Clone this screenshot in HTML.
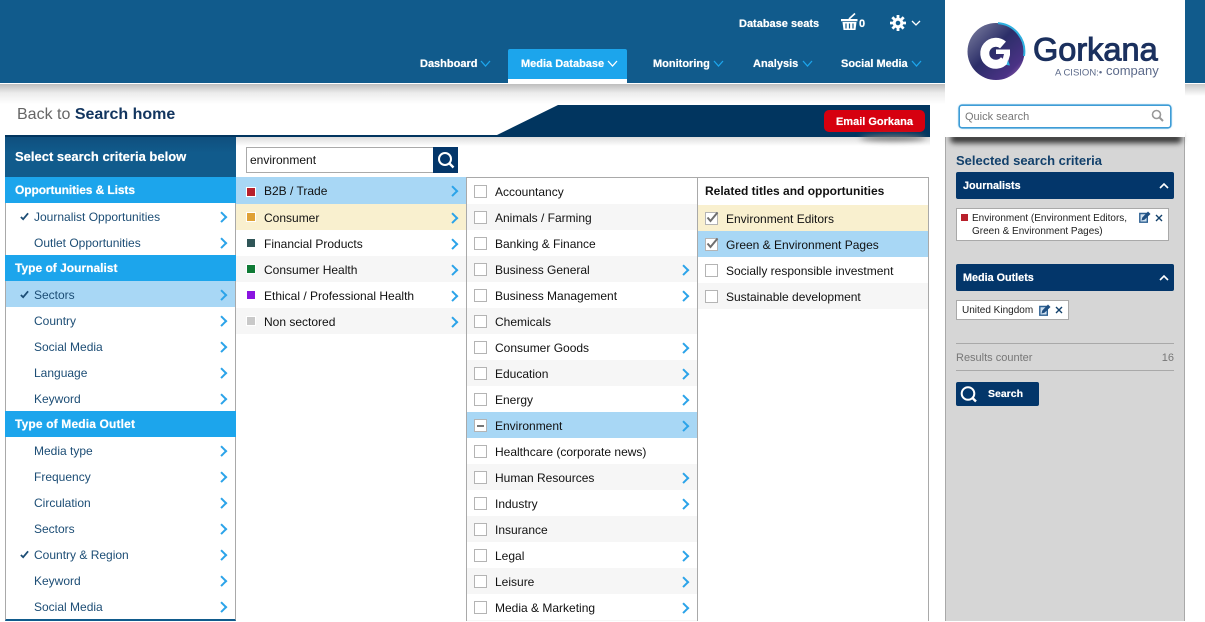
<!DOCTYPE html>
<html><head><meta charset="utf-8"><title>Gorkana</title>
<style>
*{box-sizing:border-box}
html,body{margin:0;padding:0;width:1205px;height:621px;overflow:hidden;background:#fff;font-family:"Liberation Sans",Arial,sans-serif;font-size:12px;color:#111}
.p{position:absolute;white-space:nowrap}
.nav{position:absolute;top:57px;font-weight:bold;font-size:11px;line-height:14px;color:#fff;white-space:nowrap;text-shadow:0 0 .6px #fff}
.nav svg{position:absolute;top:3px}
.list{position:absolute;overflow:hidden}
.r{position:relative;height:26px;line-height:28px;white-space:nowrap}
.r.g::after{content:"";position:absolute;width:5.5px;height:5.5px;border-top:2px solid #2ba3e9;border-right:2px solid #2ba3e9;transform:rotate(45deg);top:10px;right:10px}
.l .r{padding-left:28px;color:#1c4d75;line-height:29px}
.h{height:26px;line-height:26px;background:#1ca5ec;color:#fff;font-weight:bold;font-size:12px;padding-left:10px;text-shadow:0 0 .6px #fff}
.tk{position:absolute;left:14px;top:9px}
.c2 .r{padding-left:28px}
.c2 i{position:absolute;left:11px;top:9px;width:8px;height:8px;outline:1px solid #fff}
.c3 .r{padding-left:28px}
.c3 b,.c4 b{position:absolute;left:7px;top:7px;width:13px;height:13px;background:#fff;border:1px solid #b4b4b4}
.c4 .r{padding-left:28px}
.s{background:#f6f6f6}
.bar{position:absolute;left:956px;width:218px;height:27px;background:#03366a;border-radius:2px;color:#fff;font-weight:bold;font-size:10.8px;line-height:28px;padding-left:7px;text-shadow:0 0 .5px #fff}
.bar svg{position:absolute;right:5px;top:10px}
.tag{position:absolute;left:956px;background:#fff;border:1px solid #a9a9a9;font-size:10px;line-height:13px;color:#222;white-space:nowrap}
</style></head><body>

<!-- header -->
<div class="p" style="left:0;top:0;width:1205px;height:83px;background:#115b8c"></div>
<div class="p" style="left:0;top:83px;width:1205px;height:1px;background:#fff"></div>
<div class="p" style="left:0;top:84px;width:945px;height:20px;background:linear-gradient(#bdbdbd,#ececec 45%,#fff)"></div>
<div class="p" style="left:1185px;top:84px;width:20px;height:12px;background:linear-gradient(#c9c9c9,#fff)"></div>

<div class="p" style="left:739px;top:17px;font-weight:bold;font-size:11px;line-height:14px;color:#fff;text-shadow:0 0 .6px #fff">Database seats</div>
<svg class="p" style="left:841px;top:12px" width="17" height="19" viewBox="0 0 17 19"><path d="M8 7L14 1.500" stroke="#fff" stroke-width="1.600" fill="none"/><path d="M0 7h16.500v2.200H0z" fill="#fff"/><path d="M1.500 10h14l-1 8H2.500z" fill="#fff"/><path d="M5 11.500v5M8.500 11.500v5M12 11.500v5" stroke="#115b8c" stroke-width="1.200"/></svg>
<div class="p" style="left:859px;top:17px;font-weight:bold;font-size:11px;line-height:14px;color:#fff;text-shadow:0 0 .6px #fff">0</div>
<svg class="p" style="left:890px;top:15px" width="16" height="16" viewBox="0 0 16 16"><circle cx="8" cy="8" r="3.800" fill="none" stroke="#fff" stroke-width="3"/><path d="M8 0v16M0 8h16M2.300 2.300l11.400 11.400M13.700 2.300L2.300 13.700" stroke="#fff" stroke-width="2.800" stroke-dasharray="3 10 3" /></svg>
<svg class="p" style="left:911px;top:20px" width="10" height="7" viewBox="0 0 10 7"><path d="M1 1l4 4 4-4" fill="none" stroke="#fff" stroke-width="1.300"/></svg>

<div class="p" style="left:508px;top:49px;width:119px;height:34px;background:#1ca5ec;border-bottom:4px solid #fff;border-radius:2px 2px 0 0"></div>
<div class="nav" style="left:420px">Dashboard<svg style="left:60px" width="11" height="8" viewBox="0 0 11 8"><path d="M1 1l4.500 5L10 1" fill="none" stroke="#1ca5ec" stroke-width="1.300"/></svg></div>
<div class="nav" style="left:521px">Media Database<svg style="left:86px" width="11" height="8" viewBox="0 0 11 8"><path d="M1 1l4.500 5L10 1" fill="none" stroke="#fff" stroke-width="1.300"/></svg></div>
<div class="nav" style="left:653px">Monitoring<svg style="left:60px" width="11" height="8" viewBox="0 0 11 8"><path d="M1 1l4.500 5L10 1" fill="none" stroke="#1ca5ec" stroke-width="1.300"/></svg></div>
<div class="nav" style="left:753px">Analysis<svg style="left:49px" width="11" height="8" viewBox="0 0 11 8"><path d="M1 1l4.500 5L10 1" fill="none" stroke="#1ca5ec" stroke-width="1.300"/></svg></div>
<div class="nav" style="left:841px">Social Media<svg style="left:70px" width="11" height="8" viewBox="0 0 11 8"><path d="M1 1l4.500 5L10 1" fill="none" stroke="#1ca5ec" stroke-width="1.300"/></svg></div>

<!-- banner -->
<div class="p" style="left:17px;top:106px;font-size:16px;line-height:18px;color:#666">Back to <span style="font-weight:bold;color:#12355f">Search home</span></div>
<svg class="p" style="left:5px;top:105px" width="925" height="32" viewBox="0 0 925 32"><path d="M553 0H925V32H0V30H492Z" fill="#01355f"/></svg>
<div class="p" style="left:824px;top:110px;width:101px;height:22px;background:#d6000f;border-radius:5px;color:#fff;font-weight:bold;font-size:11px;line-height:24px;text-align:center;text-shadow:0 0 .5px #fff">Email Gorkana</div>

<!-- shadows beneath banner -->
<div class="p" style="left:236px;top:137px;width:694px;height:9px;background:linear-gradient(#dcdcdc,#fff)"></div>
<div class="p" style="left:860px;top:135px;width:66px;height:6px;background:#777;border-radius:50%;filter:blur(3px)"></div>
<div class="p" style="left:930px;top:105px;width:15px;height:45px;background:#fff"></div>

<!-- left column -->
<div class="p" style="left:5px;top:137px;width:231px;height:40px;background:linear-gradient(#0f4f7e,#115b8c 40%);color:#fff;font-weight:bold;font-size:13px;line-height:39px;padding-left:10px;text-shadow:0 0 .5px #fff">Select search criteria below</div>
<div class="list l" style="left:5px;top:177px;width:231px;height:444px;border-left:1px solid #a9a9a9;border-right:1px solid #a9a9a9;border-bottom:2px solid #115b8c;overflow:visible">
<div class="h" style="margin:0 -1px;letter-spacing:-.1px">Opportunities &amp; Lists</div>
<div class="r g"><svg class="tk" width="9" height="9" viewBox="0 0 10 10"><path d="M1 5.500l2.500 2.500L9 1.500" fill="none" stroke="#1c4d75" stroke-width="2"/></svg>Journalist Opportunities</div>
<div class="r g">Outlet Opportunities</div>
<div class="h" style="margin:0 -1px">Type of Journalist</div>
<div class="r g" style="background:#a8d7f5"><svg class="tk" width="9" height="9" viewBox="0 0 10 10"><path d="M1 5.500l2.500 2.500L9 1.500" fill="none" stroke="#1c4d75" stroke-width="2"/></svg>Sectors</div>
<div class="r g">Country</div>
<div class="r g">Social Media</div>
<div class="r g">Language</div>
<div class="r g">Keyword</div>
<div class="h" style="margin:0 -1px;letter-spacing:.15px">Type of Media Outlet</div>
<div class="r g">Media type</div>
<div class="r g">Frequency</div>
<div class="r g">Circulation</div>
<div class="r g">Sectors</div>
<div class="r g"><svg class="tk" width="9" height="9" viewBox="0 0 10 10"><path d="M1 5.500l2.500 2.500L9 1.500" fill="none" stroke="#1c4d75" stroke-width="2"/></svg>Country &amp; Region</div>
<div class="r g">Keyword</div>
<div class="r g">Social Media</div>
</div>

<!-- search box -->
<div class="p" style="left:246px;top:147px;width:188px;height:26px;background:#fff;border:1px solid #aaa;line-height:24px;padding-left:3px;font-size:12px">environment</div>
<svg class="p" style="left:433px;top:147px" width="25" height="26" viewBox="0 0 25 26"><rect width="25" height="26" fill="#03366a"/><circle cx="12" cy="12" r="6" fill="none" stroke="#fff" stroke-width="2"/><path d="M16.500 16.500l4 4" stroke="#fff" stroke-width="2.400"/></svg>

<!-- column 2 -->
<div class="list c2" style="left:236px;top:177px;width:231px;height:444px;border-right:1px solid #a9a9a9">
<div class="r g" style="background:#a8d7f5;height:27px;line-height:29px"><i style="background:#b8202b;top:11px"></i>B2B / Trade</div>
<div class="r g" style="background:#f9f0cf"><i style="background:#dfa136"></i>Consumer</div>
<div class="r g"><i style="background:#2f5557"></i>Financial Products</div>
<div class="r g s"><i style="background:#0f7a35"></i>Consumer Health</div>
<div class="r g"><i style="background:#8a14e0"></i>Ethical / Professional Health</div>
<div class="r g s"><i style="background:#c9c9c9"></i>Non sectored</div>
</div>

<!-- column 3 -->
<div class="list c3" style="left:467px;top:177px;width:231px;height:444px;border-right:1px solid #a9a9a9;border-top:1px solid #a9a9a9">
<div class="r"><b></b>Accountancy</div>
<div class="r s"><b></b>Animals / Farming</div>
<div class="r"><b></b>Banking &amp; Finance</div>
<div class="r g s"><b></b>Business General</div>
<div class="r g"><b></b>Business Management</div>
<div class="r s"><b></b>Chemicals</div>
<div class="r g"><b></b>Consumer Goods</div>
<div class="r g s"><b></b>Education</div>
<div class="r g"><b></b>Energy</div>
<div class="r g" style="background:#a8d7f5"><b><span style="position:absolute;left:2px;top:5px;width:7px;height:2px;background:#777"></span></b>Environment</div>
<div class="r"><b></b>Healthcare (corporate news)</div>
<div class="r g s"><b></b>Human Resources</div>
<div class="r g"><b></b>Industry</div>
<div class="r s"><b></b>Insurance</div>
<div class="r g"><b></b>Legal</div>
<div class="r g s"><b></b>Leisure</div>
<div class="r g"><b></b>Media &amp; Marketing</div>
<div class="s" style="height:1px"></div>
</div>

<!-- column 4 -->
<div class="list c4" style="left:698px;top:177px;width:231px;height:444px;border-right:1px solid #a9a9a9;border-top:1px solid #a9a9a9">
<div style="height:27px;line-height:27px;padding-left:7px;font-weight:bold;color:#111">Related titles and opportunities</div>
<div class="r" style="background:#f9f0cf"><b><svg style="position:absolute;left:0;top:-1px;overflow:visible" width="13" height="12" viewBox="0 0 13 12"><path d="M1.500 5.500l3 3.500 7-8.500" fill="none" stroke="#6f6f6f" stroke-width="2"/></svg></b>Environment Editors</div>
<div class="r" style="background:#a8d7f5"><b><svg style="position:absolute;left:0;top:-1px;overflow:visible" width="13" height="12" viewBox="0 0 13 12"><path d="M1.500 5.500l3 3.500 7-8.500" fill="none" stroke="#6f6f6f" stroke-width="2"/></svg></b>Green &amp; Environment Pages</div>
<div class="r"><b></b>Socially responsible investment</div>
<div class="r s"><b></b>Sustainable development</div>
</div>

<!-- sidebar -->
<div class="p" style="left:945px;top:137px;width:240px;height:484px;background:#d6d6d6;border-left:1px solid #a9a9a9;border-right:1px solid #a9a9a9"></div>
<div class="p" style="left:950px;top:134px;width:232px;height:9px;background:#333;filter:blur(3px);border-radius:4px"></div>
<div class="p" style="left:956px;top:153px;font-weight:bold;font-size:13px;line-height:15px;color:#12406b">Selected search criteria</div>

<div class="bar" style="top:172px">Journalists<svg width="10" height="7" viewBox="0 0 10 7"><path d="M1 6l4-4 4 4" fill="none" stroke="#fff" stroke-width="1.600"/></svg></div>
<div class="tag" style="top:208px;width:213px;height:33px;padding:3px 0 0 15px"><span style="position:absolute;left:4px;top:5px;width:7px;height:7px;background:#b8202b"></span>Environment (Environment Editors,<br>Green &amp; Environment Pages)
<svg style="position:absolute;left:182px;top:2px" width="12" height="12" viewBox="0 0 12 12"><path d="M.8 2.500h7.500v8.700H.8z" fill="#cfe0f0" stroke="#2b5f91" stroke-width="1.400"/><path d="M2.500 9.500L3.300 6.500 9 .5l2.500 2.500L5.500 8.800z" fill="#1f4f82"/></svg>
<svg style="position:absolute;left:198px;top:5px" width="8" height="8" viewBox="0 0 8 8"><path d="M1 1l6 6M7 1L1 7" stroke="#12406b" stroke-width="1.400"/></svg></div>

<div class="bar" style="top:264px">Media Outlets<svg width="10" height="7" viewBox="0 0 10 7"><path d="M1 6l4-4 4 4" fill="none" stroke="#fff" stroke-width="1.600"/></svg></div>
<div class="tag" style="top:300px;width:113px;height:20px;padding:3px 0 0 5px">United Kingdom
<svg style="position:absolute;left:82px;top:3px" width="12" height="12" viewBox="0 0 12 12"><path d="M.8 2.500h7.500v8.700H.8z" fill="#cfe0f0" stroke="#2b5f91" stroke-width="1.400"/><path d="M2.500 9.500L3.300 6.500 9 .5l2.500 2.500L5.500 8.800z" fill="#1f4f82"/></svg>
<svg style="position:absolute;left:98px;top:5px" width="8" height="8" viewBox="0 0 8 8"><path d="M1 1l6 6M7 1L1 7" stroke="#12406b" stroke-width="1.400"/></svg></div>

<div class="p" style="left:956px;top:343px;width:218px;height:28px;border-top:1px solid #a9a9a9;border-bottom:1px solid #a9a9a9;color:#777;font-size:11px;line-height:28px">Results counter<span style="position:absolute;right:0">16</span></div>
<div class="p" style="left:956px;top:382px;width:83px;height:24px;background:#03366a;border-radius:2px;color:#fff;font-weight:bold;font-size:10.5px;line-height:24px;padding-left:32px;text-shadow:0 0 .5px #fff">Search
<svg style="position:absolute;left:3px;top:3px" width="18" height="18" viewBox="0 0 18 18"><circle cx="9" cy="8.500" r="6.300" fill="none" stroke="#fff" stroke-width="2"/><path d="M13.500 13l3.500 3.500" stroke="#fff" stroke-width="2.400"/></svg></div>

<!-- logo panel -->
<div class="p" style="left:945px;top:0;width:240px;height:137px;background:#fff"></div>
<svg class="p" style="left:960px;top:18px" width="210" height="68" viewBox="0 0 210 68">
<defs><linearGradient id="lg" x1="0" y1=".15" x2=".85" y2="1"><stop offset="0" stop-color="#74779a"/><stop offset=".45" stop-color="#2b2e68"/><stop offset=".85" stop-color="#4a3285"/><stop offset="1" stop-color="#8a5aa8"/></linearGradient></defs>
<circle cx="36" cy="33.500" r="28.500" fill="url(#lg)"/>
<path d="M38 5.100A28.500 28.500 0 0 1 64 38" fill="none" stroke="#2fb0e0" stroke-width="2"/>
<path d="M43 27A11 11 0 1 0 44.500 42" fill="none" stroke="#fff" stroke-width="9"/>
<path d="M36 31.500H50V37L47 47L42 44L44 36H36z" fill="#fff"/>
<path d="M48 42L50 47.500L46.500 47z" fill="#2fb0e0"/>
<text x="73" y="42.500" font-family="Liberation Sans, sans-serif" font-size="32.500" fill="#1b305e" stroke="#1b305e" stroke-width="1">Gorkana</text>
<text x="95" y="57.500" font-family="Liberation Sans, sans-serif" font-size="9.500" fill="#5c6a8a">A CISION:•</text>
<text x="146" y="57" font-family="Liberation Sans, sans-serif" font-size="13" fill="#5c6a8a">company</text>
</svg>
<div class="p" style="left:959px;top:105px;width:212px;height:23px;background:#fff;border:1px solid #3e9cd6;border-radius:3px;box-shadow:0 0 0 .6px #3e9cd6,0 0 2px #5aaee0;color:#777;font-size:11px;line-height:22px;padding-left:5px">Quick search
<svg style="position:absolute;right:6px;top:3px" width="13" height="13" viewBox="0 0 13 13"><circle cx="5.500" cy="5.500" r="4" fill="none" stroke="#999" stroke-width="1.600"/><path d="M8.500 8.500l3.500 3.500" stroke="#999" stroke-width="2"/></svg></div>

</body></html>
